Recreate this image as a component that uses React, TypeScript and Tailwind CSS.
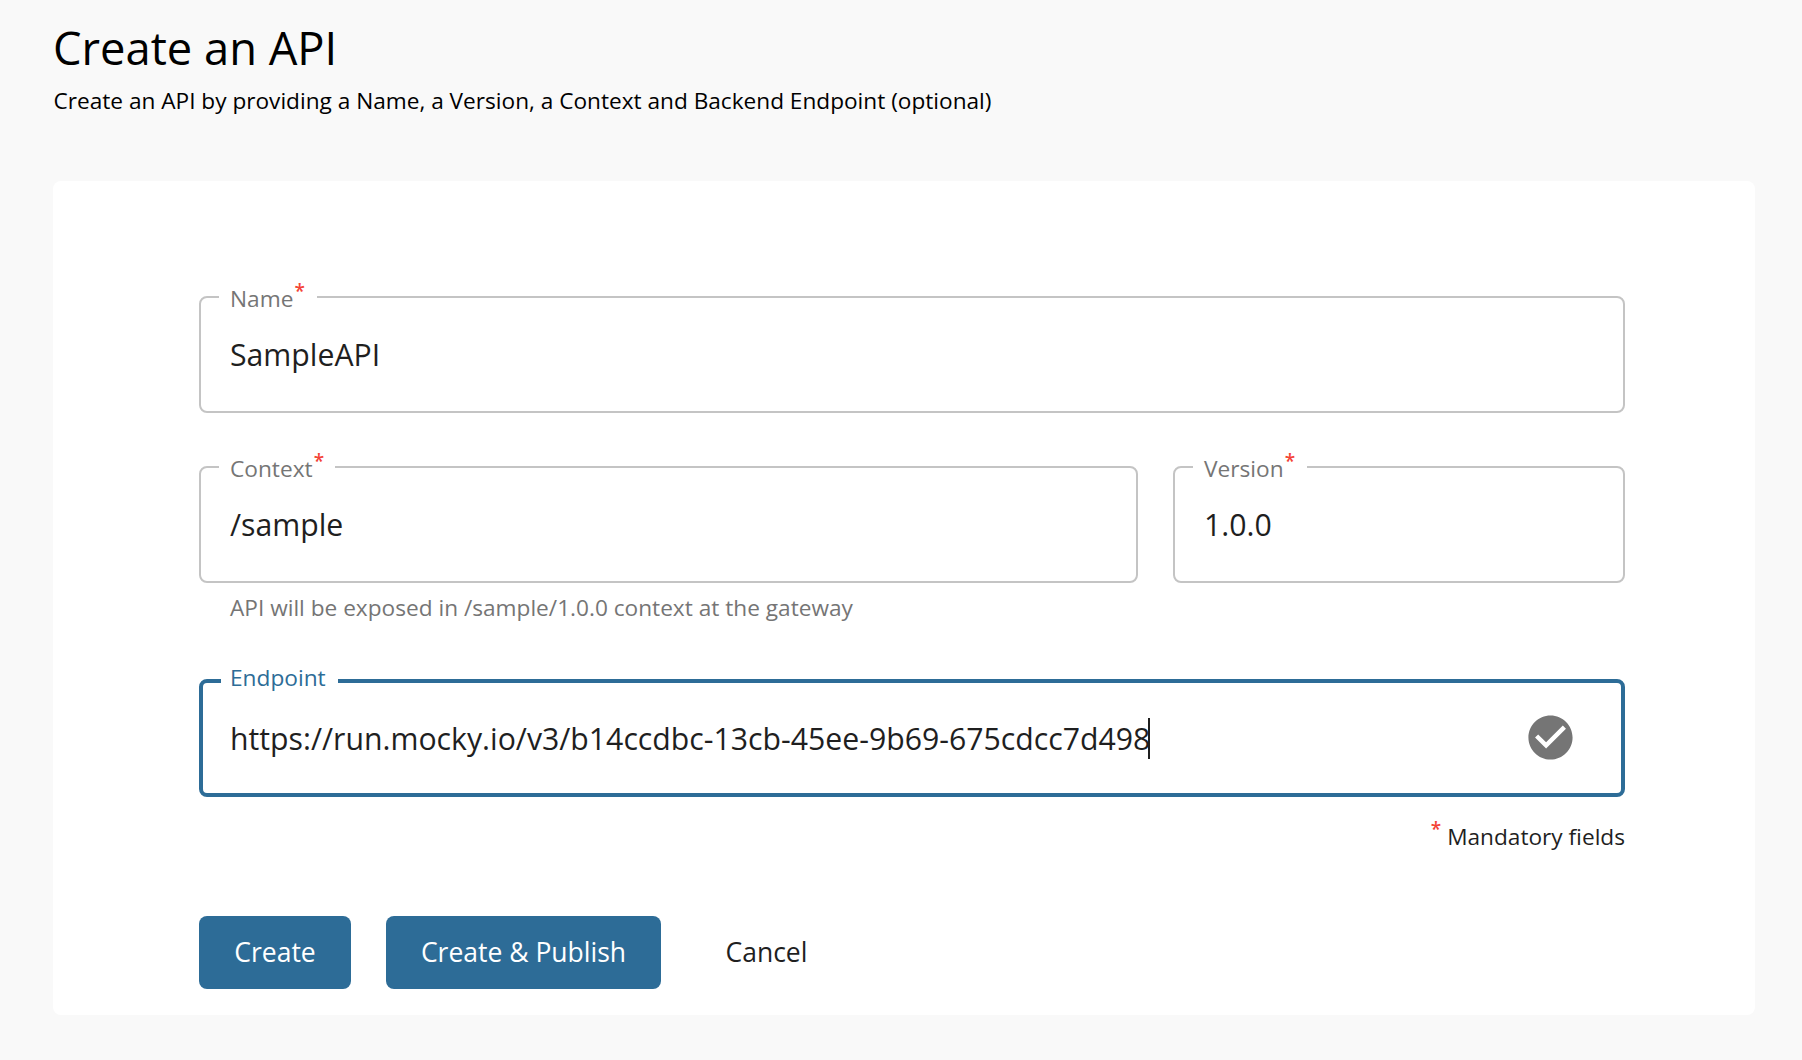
import React from "react";
import { MdCheckCircle } from "react-icons/md";

type FieldProps = {
  label: string;
  required?: boolean;
  focused?: boolean;
  labelWidth: string;
  className?: string;
  children: React.ReactNode;
};

function Field({ label, required, focused, labelWidth, className = "", children }: FieldProps) {
  const frame = focused ? "h-[118px] border-4 border-[#2d6c97] px-[27px]" : "h-[117px] border-2 border-[#c4c4c4] px-[29px]";
  const caption = focused ? "-top-5 text-[#2d6c97] pl-[9px]" : "-top-3.5 text-[#757575] pl-[11px]";
  return (
    <div className={`relative flex items-center rounded-lg ${frame} ${className}`}>
      <label className={`absolute left-[18px] flex h-[30px] bg-white text-[22.7px] leading-[30px] ${caption} ${labelWidth}`}>
        {label}
        {required && <Star className="-mt-2 ml-px" />}
      </label>
      {children}
    </div>
  );
}

function Star({ className = "" }: { className?: string }) {
  return <span className={`text-[19px] leading-[30px] font-semibold text-[#f44336] ${className}`}>*</span>;
}

function Value({ children }: { children: React.ReactNode }) {
  return <span className="text-[30.23px] leading-[41px] text-[#1f1f1f]">{children}</span>;
}

export default function App() {
  return (
    <div className="min-h-screen bg-[#f9f9f9] pt-[17px] pr-[47px] pb-[45px] pl-[53px] font-['Open_Sans',sans-serif] text-black">
      <header>
        <h1 className="text-[45.3px] leading-[62px]">Create an API</h1>
        <p className="mt-[7px] pl-[0.5px] text-[22.63px] leading-[30px]">
          Create an API by providing a Name, a Version, a Context and Backend Endpoint (optional)
        </p>
      </header>

      <main className="mt-[65px] h-[834px] rounded-lg bg-white pt-[115px] pr-[130px] pl-[146px]">
        <Field label="Name" required labelWidth="w-[98px]">
          <Value>SampleAPI</Value>
        </Field>

        <div className="mt-[53px] flex gap-[35px]">
          <Field label="Context" required labelWidth="w-[116px]" className="w-[939px]">
            <Value>/sample</Value>
          </Field>
          <Field label="Version" required labelWidth="w-[114px]" className="flex-1">
            <Value>1.0.0</Value>
          </Field>
        </div>
        <p className="mt-2.5 pl-[31px] text-[22.65px] leading-[30px] text-[#757575]">
          API will be exposed in /sample/1.0.0 context at the gateway
        </p>

        <Field label="Endpoint" focused labelWidth="w-[117px]" className="mt-14">
          <Value>https://run.mocky.io/v3/b14ccdbc-13cb-45ee-9b69-675cdcc7d498</Value>
          <span className="-ml-[2px] h-[41px] w-0.5 bg-[#1f1f1f]" />
          <MdCheckCircle className="mr-[17px] mb-px ml-auto size-[53px] text-[#757575]" />
        </Field>

        <div className="mt-[25px] flex justify-end text-[22.65px] leading-[30px] text-[#1f1f1f]">
          <Star className="-mt-2 mr-[6px]" />
          <span>Mandatory fields</span>
        </div>

        <div className="mt-16 flex h-[73px] text-[26.5px] leading-9">
          <button className="w-[152px] rounded-lg bg-[#2d6c97] pb-px text-white">Create</button>
          <button className="ml-[35px] w-[275px] rounded-lg bg-[#2d6c97] pb-px text-white">Create &amp; Publish</button>
          <button className="ml-[64.5px] pb-px text-[#1f1f1f]">Cancel</button>
        </div>
      </main>
    </div>
  );
}
